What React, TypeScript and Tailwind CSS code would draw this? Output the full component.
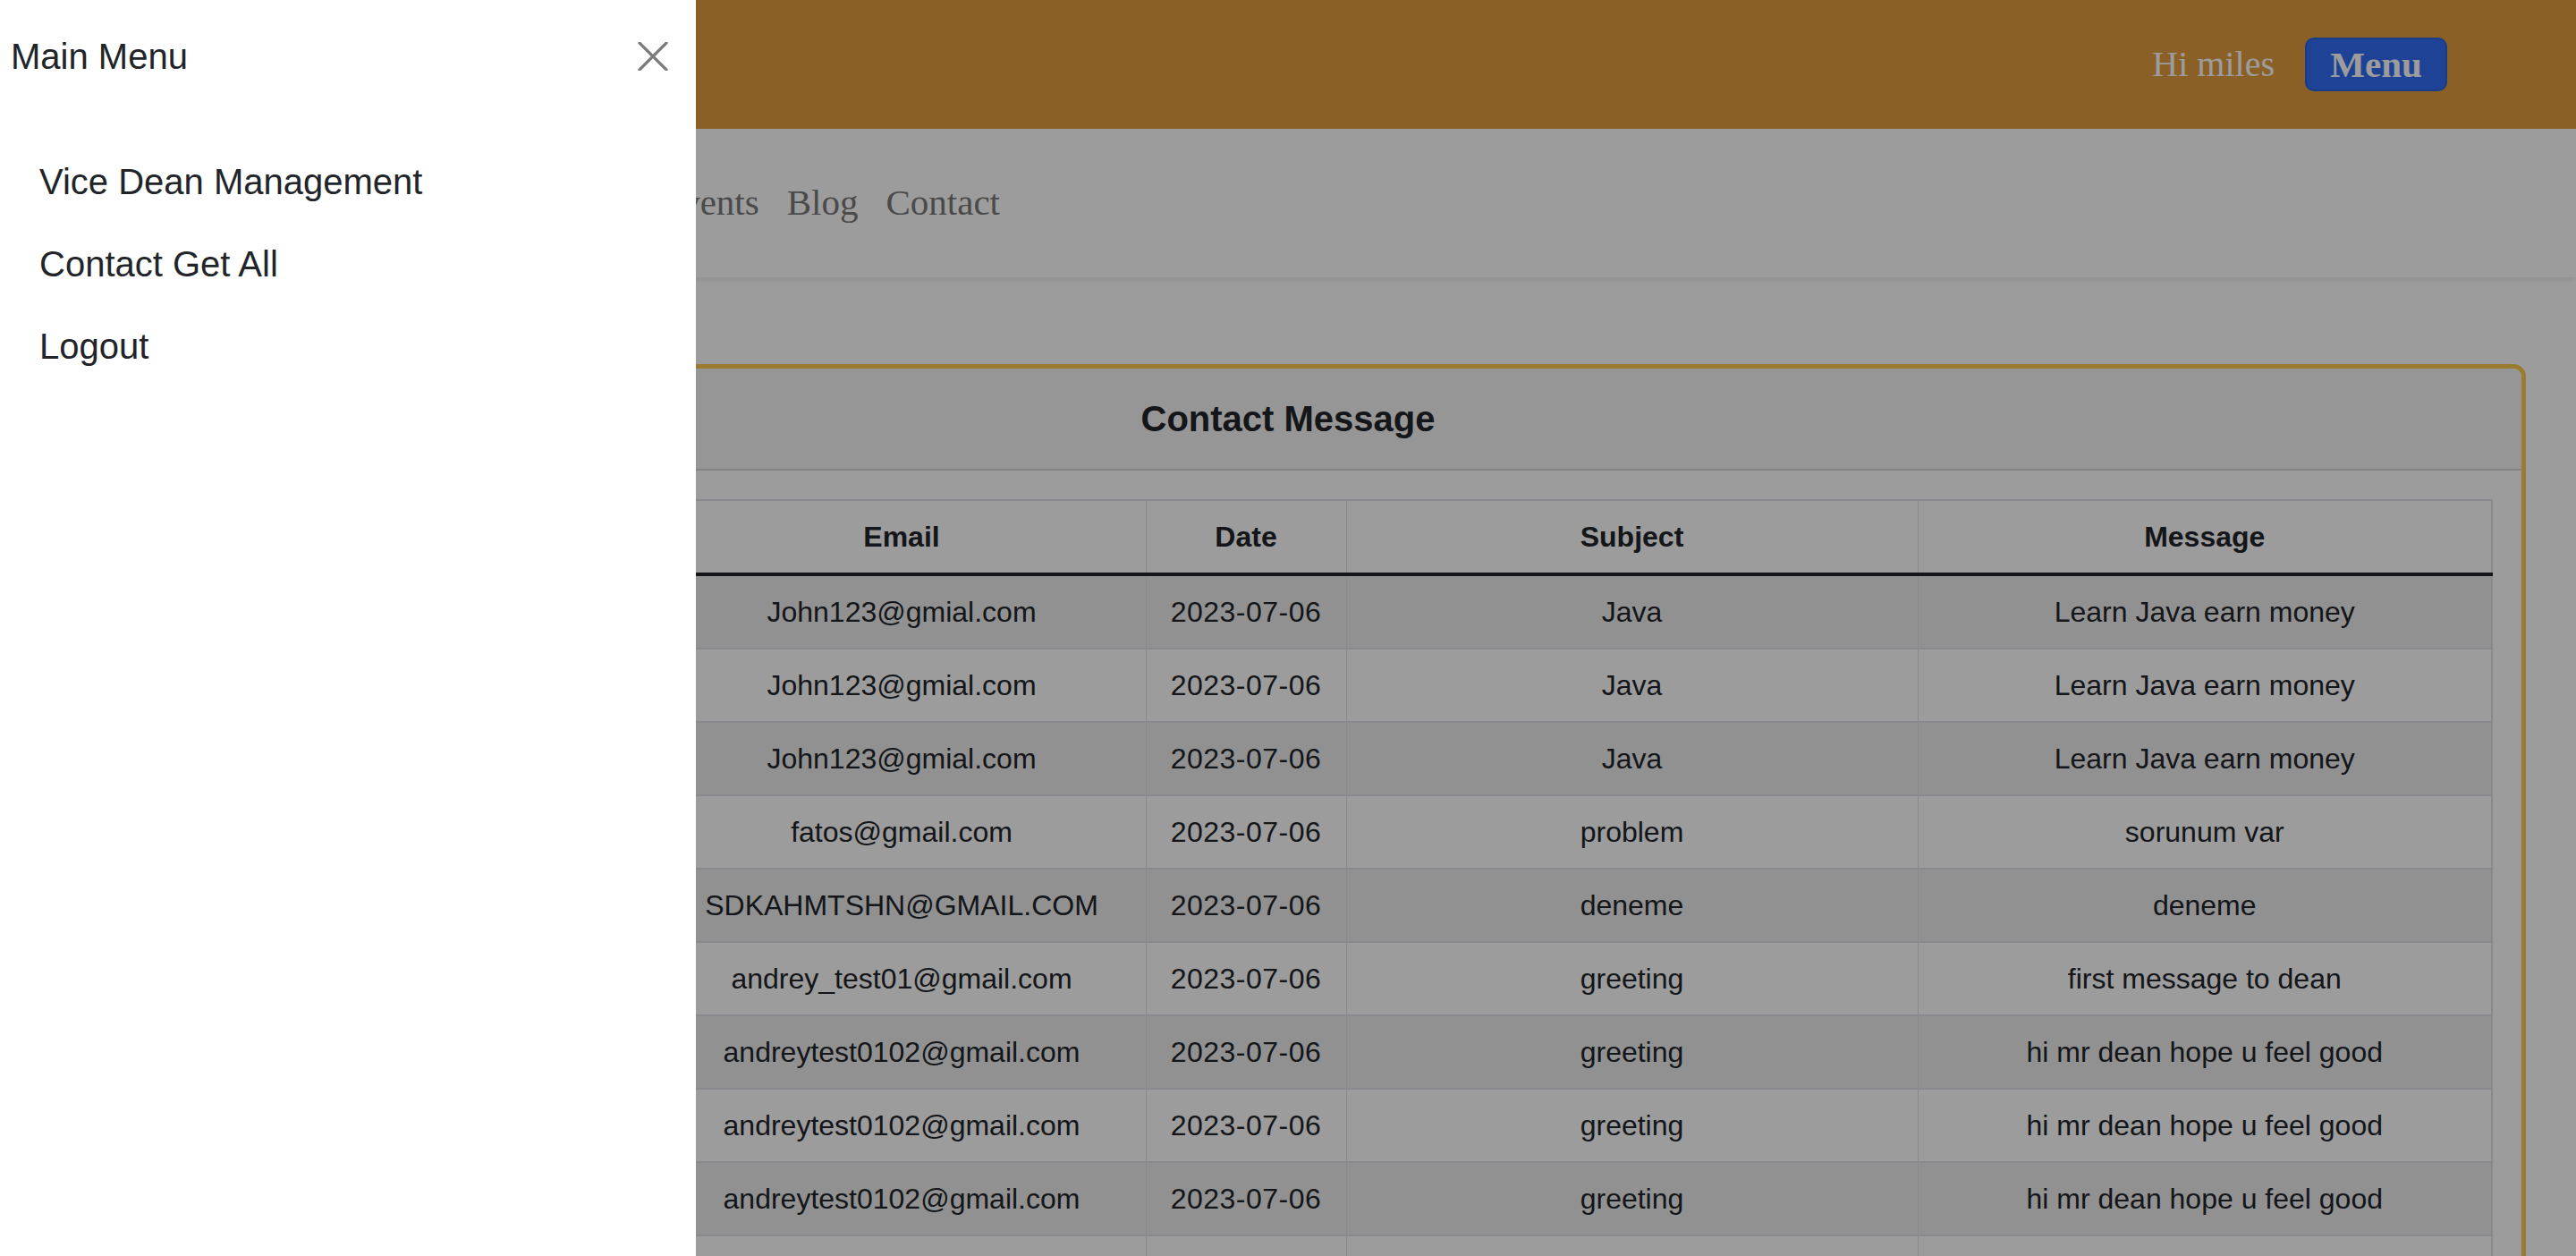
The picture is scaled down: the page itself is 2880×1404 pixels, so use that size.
import React from 'react';

type Row = { name: string; email: string; date: string; subject: string; message: string };

const rows: Row[] = [
  { name: 'John', email: 'John123@gmial.com', date: '2023-07-06', subject: 'Java', message: 'Learn Java earn money' },
  { name: 'John', email: 'John123@gmial.com', date: '2023-07-06', subject: 'Java', message: 'Learn Java earn money' },
  { name: 'John', email: 'John123@gmial.com', date: '2023-07-06', subject: 'Java', message: 'Learn Java earn money' },
  { name: 'fatos', email: 'fatos@gmail.com', date: '2023-07-06', subject: 'problem', message: 'sorunum var' },
  { name: 'Ahmet', email: 'SDKAHMTSHN@GMAIL.COM', date: '2023-07-06', subject: 'deneme', message: 'deneme' },
  { name: 'Andrey', email: 'andrey_test01@gmail.com', date: '2023-07-06', subject: 'greeting', message: 'first message to dean' },
  { name: 'Andrey', email: 'andreytest0102@gmail.com', date: '2023-07-06', subject: 'greeting', message: 'hi mr dean hope u feel good' },
  { name: 'Andrey', email: 'andreytest0102@gmail.com', date: '2023-07-06', subject: 'greeting', message: 'hi mr dean hope u feel good' },
  { name: 'Andrey', email: 'andreytest0102@gmail.com', date: '2023-07-06', subject: 'greeting', message: 'hi mr dean hope u feel good' },
];

// links left of "Events" sit under the open offcanvas
const navLinks = ['Events', 'Blog', 'Contact'];
const menuItems = ['Vice Dean Management', 'Contact Get All', 'Logout'];

export default function App() {
  return (
    <div className="relative h-[1404px] overflow-hidden bg-white font-['Liberation_Sans',Arial,sans-serif] text-[#212529]">
      <header className="h-[144px] bg-[#e49d40] flex items-center justify-end gap-[34px] pr-[144px] font-['Liberation_Serif','Times_New_Roman',serif]">
        <span className="text-[40px] text-white">Hi miles</span>
        <button className="h-[60px] w-[159px] rounded-[10px] bg-[#316ef6] border-2 border-[#2a62e0] text-white text-[41px] font-bold leading-none">
          Menu
        </button>
      </header>

      <nav className="h-[166px] flex items-center shadow-[0_3px_6px_rgba(0,0,0,0.08)] font-['Liberation_Serif','Times_New_Roman',serif]">
        <div className="w-[1118px] flex justify-end gap-[31px] text-[41px] text-[#7a7a7a]">
          {navLinks.map((l) => (
            <span key={l}>{l}</span>
          ))}
        </div>
      </nav>

      <main className="px-[56px] pt-[97px]">
        <section className="border-[5px] border-[#feca4d] rounded-[14px] overflow-hidden">
          <div className="bg-[#f6f6f6] border-b-2 border-[#d4d4d4] py-[32px] text-center">
            <h5 className="text-[40px] leading-[48px] font-bold">Contact Message</h5>
          </div>
          <div className="p-[32px]">
            <table className="w-full table-fixed border-collapse border-2 border-[#dee2e6] text-[32px] leading-[48px] text-center">
              <colgroup>
                <col className="w-[641px]" />
                <col className="w-[546px]" />
                <col className="w-[224px]" />
                <col className="w-[639px]" />
                <col />
              </colgroup>
              <thead>
                <tr className="border-b-[4px] border-[#212529]">
                  {['Name', 'Email', 'Date', 'Subject', 'Message'].map((h) => (
                    <th key={h} className="px-[16px] py-[16px] font-bold border-x border-[#dee2e6]">
                      {h}
                    </th>
                  ))}
                </tr>
              </thead>
              <tbody>
                {rows.map((r, i) => (
                  <tr key={i} className={`border-b-2 border-[#dee2e6] ${i % 2 === 0 ? 'bg-[#eeeeee]' : 'bg-white'}`}>
                    <td className="px-[16px] py-[16px] border-x border-[#dee2e6] whitespace-nowrap">{r.name}</td>
                    <td className="px-[16px] py-[16px] border-x border-[#dee2e6] whitespace-nowrap">{r.email}</td>
                    <td className="px-[16px] py-[16px] border-x border-[#dee2e6] whitespace-nowrap tracking-[0.5px]">{r.date}</td>
                    <td className="px-[16px] py-[16px] border-x border-[#dee2e6] whitespace-nowrap">{r.subject}</td>
                    <td className="px-[16px] py-[16px] border-x border-[#dee2e6] whitespace-nowrap">{r.message}</td>
                  </tr>
                ))}
                <tr className="border-b-2 border-[#dee2e6] bg-white">
                  <td className="h-[82px] border-x border-[#dee2e6]" />
                  <td className="border-x border-[#dee2e6]" />
                  <td className="border-x border-[#dee2e6]" />
                  <td className="border-x border-[#dee2e6]" />
                  <td className="border-x border-[#dee2e6]" />
                </tr>
              </tbody>
            </table>
          </div>
        </section>
      </main>

      {/* backdrop */}
      <div className="absolute inset-0 bg-[rgba(0,0,0,0.39)]" />

      {/* offcanvas */}
      <aside className="absolute left-0 top-0 bottom-0 w-[778px] bg-white">
        <div className="flex items-center justify-between pl-[12px] pr-[31px] pt-[39px]">
          <h5 className="text-[40px] leading-[48px]">Main Menu</h5>
          <button aria-label="Close" className="w-[34px] h-[32px] flex items-center justify-center">
            <svg width="34" height="32" viewBox="0 0 34 32" fill="none">
              <path d="M2 1 L32 31 M32 1 L2 31" stroke="#7b7b7b" strokeWidth="3.2" strokeLinecap="round" />
            </svg>
          </button>
        </div>
        <ul className="mt-[70px] pl-[44px]">
          {menuItems.map((m) => (
            <li key={m} className="py-[22px] text-[40px] leading-[48px]">
              {m}
            </li>
          ))}
        </ul>
      </aside>
    </div>
  );
}
